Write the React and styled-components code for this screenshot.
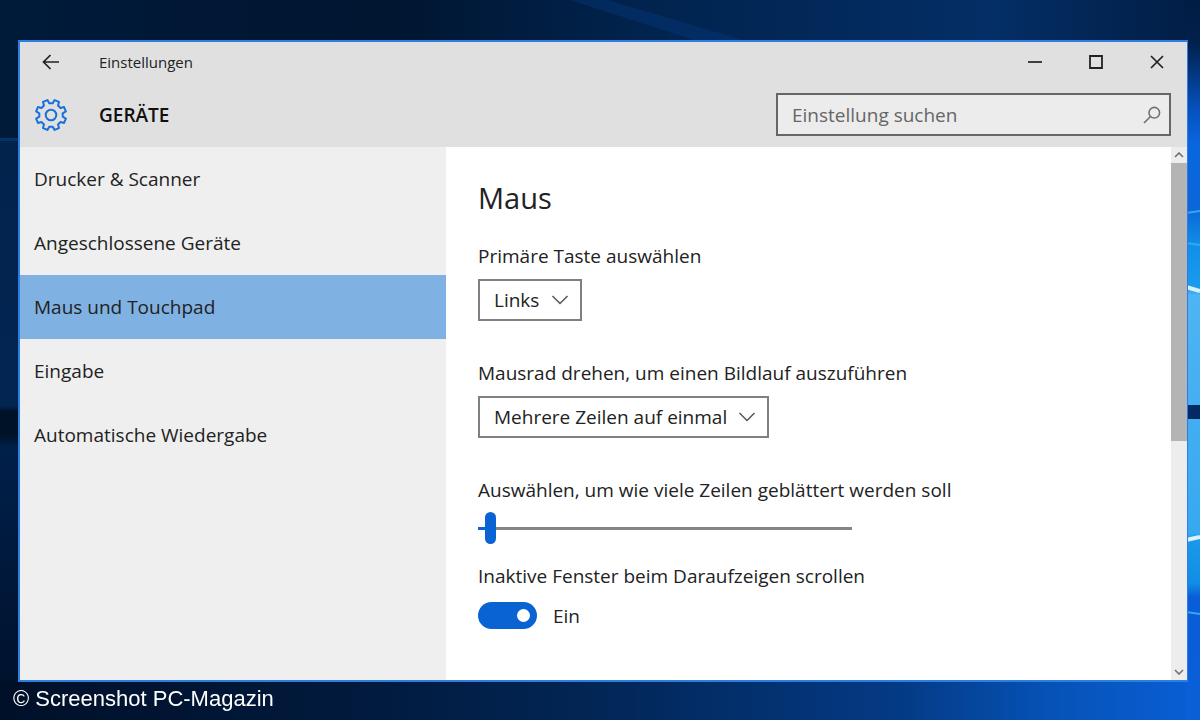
import React, { useState } from "react";
import styled, { createGlobalStyle, css } from "styled-components";

const navItems = [
    "Drucker & Scanner",
    "Angeschlossene Geräte",
    "Maus und Touchpad",
    "Eingabe",
    "Automatische Wiedergabe",
];

// outline of a cog with eight teeth around 0,0
const gearPath = () => {
    const points = [];
    for (let i = 0; i < 8; i++) {
        const mid = 22.5 + i * 45;
        [[-14, 11.8], [-9, 15.3], [9, 15.3], [14, 11.8]].forEach(([offset, r]) => {
            const a = ((mid + offset) * Math.PI) / 180;
            points.push(`${(r * Math.sin(a)).toFixed(2)} ${(-r * Math.cos(a)).toFixed(2)}`);
        });
    }
    return `M${points.join("L")}Z`;
};

const GearIcon = () => (
    <svg width="34" height="34" viewBox="-17 -17 34 34" fill="none" stroke="#1a6fdc" strokeWidth="2" strokeLinejoin="round" aria-hidden="true">
        <path d={gearPath()} />
        <circle r="5.3" />
    </svg>
);

const BackIcon = () => (
    <svg width="18" height="16" viewBox="0 0 18 16" fill="none" stroke="#222" strokeWidth="1.7" aria-hidden="true">
        <path d="M17 8H1.5M8.5 1L1.5 8l7 7" />
    </svg>
);

const SearchIcon = () => (
    <svg width="18" height="18" viewBox="0 0 18 18" fill="none" stroke="#707070" strokeWidth="1.6" aria-hidden="true">
        <circle cx="11.3" cy="6.7" r="5.3" />
        <path d="M7.5 10.5L1 17" />
    </svg>
);

const ChevronDown = () => (
    <svg width="18" height="10" viewBox="0 0 18 10" fill="none" stroke="#555" strokeWidth="1.5" aria-hidden="true">
        <path d="M1.5 1L9 8.5 16.5 1" />
    </svg>
);

const ScrollArrow = ({ d }) => (
    <svg width="10" height="6" viewBox="0 0 10 6" fill="none" stroke="#707070" strokeWidth="1.6" aria-hidden="true">
        <path d={d} />
    </svg>
);

const Wallpaper = () => (
    <Backdrop viewBox="0 0 1200 720" preserveAspectRatio="none" aria-hidden="true">
        <defs>
            <linearGradient id="night" x1="0" x2="1" y1="0" y2="0">
                <stop offset="0" stopColor="#001a3a" />
                <stop offset="0.33" stopColor="#001631" />
                <stop offset="0.55" stopColor="#01244f" />
                <stop offset="0.83" stopColor="#042e66" />
                <stop offset="1" stopColor="#011d44" />
            </linearGradient>
            <linearGradient id="floor" x1="0" x2="1" y1="0" y2="0">
                <stop offset="0" stopColor="#001029" />
                <stop offset="0.3" stopColor="#011a3d" />
                <stop offset="0.5" stopColor="#022656" />
                <stop offset="0.75" stopColor="#043a85" />
                <stop offset="0.88" stopColor="#0653b8" />
                <stop offset="1" stopColor="#0a5fd6" />
            </linearGradient>
            <linearGradient id="edge" x1="0" x2="0" y1="0" y2="1">
                <stop offset="0" stopColor="#02234c" />
                <stop offset="0.46" stopColor="#022552" />
                <stop offset="0.47" stopColor="#001228" />
                <stop offset="0.51" stopColor="#001228" />
                <stop offset="0.53" stopColor="#00204a" />
                <stop offset="1" stopColor="#001029" />
            </linearGradient>
            <linearGradient id="glow" x1="0" x2="0" y1="0" y2="1">
                <stop offset="0" stopColor="#011d44" />
                <stop offset="0.06" stopColor="#01204c" />
                <stop offset="0.15" stopColor="#0650bd" />
                <stop offset="0.2" stopColor="#0a66de" />
                <stop offset="0.29" stopColor="#0b66d8" />
                <stop offset="0.34" stopColor="#0f8fe8" />
                <stop offset="0.4" stopColor="#1a9cee" />
                <stop offset="0.41" stopColor="#4fb4f3" />
                <stop offset="0.74" stopColor="#37a9f0" />
                <stop offset="0.75" stopColor="#1b98ea" />
                <stop offset="0.81" stopColor="#128de6" />
                <stop offset="0.83" stopColor="#0a5cd8" />
                <stop offset="1" stopColor="#0a5fd6" />
            </linearGradient>
        </defs>
        <rect width="1200" height="720" fill="url(#night)" />
        <path d="M570 0h38l142 42h-50z" fill="#063a80" opacity="0.4" />
        <path d="M0 138h20v582H0z" fill="url(#edge)" />
        <path d="M0 138h20v3H0z" fill="#04336c" />
        <rect y="680" width="1200" height="40" fill="url(#floor)" />
        <rect x="1186" width="14" height="720" fill="url(#glow)" />
        <path d="M1186 213l14-2M1186 243l14 2M1186 612l14 2" stroke="#36a6ef" strokeWidth="2" />
        <path d="M1186 287l14 4M1186 540l14-3" stroke="#d8f3ff" strokeWidth="4" />
        <path d="M1186 405h14v14h-14z" fill="#042a66" />
    </Backdrop>
);

const App = () => {
    const [active, setActive] = useState("Maus und Touchpad");
    const [lines, setLines] = useState(3);
    const [inactiveScroll, setInactiveScroll] = useState(true);

    return (
        <>
            <GlobalStyle />
            <Wallpaper />
            <Page>
                <Window>
                    <TitleBar>
                        <BackButton type="button" aria-label="Zurück"><BackIcon /></BackButton>
                        <Title>Einstellungen</Title>
                        <WindowButton type="button" aria-label="Minimieren">
                            <svg width="14" height="14" viewBox="0 0 14 14" stroke="#222" strokeWidth="1.7"><path d="M0 7h14" /></svg>
                        </WindowButton>
                        <WindowButton type="button" aria-label="Maximieren">
                            <svg width="14" height="14" viewBox="0 0 14 14" fill="none" stroke="#222" strokeWidth="1.8"><path d="M1 1h12v12H1z" /></svg>
                        </WindowButton>
                        <WindowButton type="button" aria-label="Schließen">
                            <svg width="14" height="14" viewBox="0 0 14 14" stroke="#222" strokeWidth="1.7"><path d="M1 1l12 12M13 1L1 13" /></svg>
                        </WindowButton>
                    </TitleBar>
                    <Header>
                        <GearBox><GearIcon /></GearBox>
                        <Category>GERÄTE</Category>
                        <SearchBox>
                            <SearchInput type="text" placeholder="Einstellung suchen" aria-label="Einstellung suchen" />
                            <SearchIcon />
                        </SearchBox>
                    </Header>
                    <Body>
                        <Nav>
                            {navItems.map((item) => (
                                <NavItem key={item} href="#" $active={item === active} onClick={() => setActive(item)}>
                                    {item}
                                </NavItem>
                            ))}
                        </Nav>
                        <Content>
                            <Heading>Maus</Heading>
                            <Field $gap="11px" $space="40px">
                                <Label htmlFor="button">Primäre Taste auswählen</Label>
                                <SelectBox $width="104px">
                                    <Select id="button">
                                        <option>Links</option>
                                        <option>Rechts</option>
                                    </Select>
                                    <ChevronDown />
                                </SelectBox>
                            </Field>
                            <Field $gap="11px" $space="40px">
                                <Label htmlFor="wheel">Mausrad drehen, um einen Bildlauf auszuführen</Label>
                                <SelectBox $width="291px">
                                    <Select id="wheel">
                                        <option>Mehrere Zeilen auf einmal</option>
                                        <option>Eine Bildschirmseite</option>
                                    </Select>
                                    <ChevronDown />
                                </SelectBox>
                            </Field>
                            <Field $gap="10px" $space="20px">
                                <Label htmlFor="lines">Auswählen, um wie viele Zeilen geblättert werden soll</Label>
                                <Slider
                                    id="lines"
                                    type="range"
                                    min="1"
                                    max="100"
                                    value={lines}
                                    onChange={(e) => setLines(Number(e.target.value))}
                                    style={{ "--fill": `${lines}%` }}
                                />
                            </Field>
                            <Field $gap="14px" $space="20px">
                                <Label htmlFor="inactive">Inaktive Fenster beim Daraufzeigen scrollen</Label>
                                <ToggleRow>
                                    <Toggle
                                        id="inactive"
                                        type="checkbox"
                                        checked={inactiveScroll}
                                        onChange={(e) => setInactiveScroll(e.target.checked)}
                                    />
                                    <span>{inactiveScroll ? "Ein" : "Aus"}</span>
                                </ToggleRow>
                            </Field>
                        </Content>
                        <ScrollBar>
                            <ScrollButton type="button" aria-label="Nach oben"><ScrollArrow d="M1 5l4-4 4 4" /></ScrollButton>
                            <ScrollThumb />
                            <ScrollRest />
                            <ScrollButton type="button" aria-label="Nach unten"><ScrollArrow d="M1 1l4 4 4-4" /></ScrollButton>
                        </ScrollBar>
                    </Body>
                </Window>
                <Caption>© Screenshot PC-Magazin</Caption>
            </Page>
        </>
    );
};

export default App;

const GlobalStyle = createGlobalStyle`
    * {
        box-sizing: border-box;
    }

    body {
        margin: 0;
        background: #001631;
        color: #222;
        font-family: "Open Sans", "Noto Sans", sans-serif;
        font-size: 19px;
        line-height: 24px;
    }

    button, input, select {
        margin: 0;
        font: inherit;
        color: inherit;
    }

    svg {
        display: block;
        flex: none;
    }
`;

const Backdrop = styled.svg`
    position: fixed;
    inset: 0;
    z-index: -1;
    width: 100%;
    height: 100%;
`;

const Page = styled.div`
    display: flex;
    flex-direction: column;
    min-height: 100vh;
    padding: 40px 12px 4px 18px;
`;

const Window = styled.main`
    flex: 1;
    display: flex;
    flex-direction: column;
    border: 2px solid #2c7fe0;
    border-right-width: 1px;
    background: #fff;
`;

const TitleBar = styled.div`
    display: flex;
    align-items: center;
    height: 40px;
    background: #e0e0e0;
`;

const iconButton = css`
    display: flex;
    align-items: center;
    justify-content: center;
    padding: 0;
    border: none;
    background: none;
`;

const BackButton = styled.button`
    ${iconButton}
    width: 62px;
    height: 100%;
`;

const Title = styled.span`
    flex: 1;
    padding-left: 17px;
    font-size: 15px;
`;

const WindowButton = styled.button`
    ${iconButton}
    width: 61px;
    height: 100%;
`;

const Header = styled.header`
    display: flex;
    align-items: center;
    height: 65px;
    padding-right: 16px;
    background: #e0e0e0;
`;

const GearBox = styled.div`
    display: flex;
    justify-content: center;
    width: 62px;
`;

const Category = styled.h1`
    flex: 1;
    margin: 0;
    padding-left: 17px;
    font-size: 19px;
    font-weight: 600;
    color: #111;
`;

const SearchBox = styled.div`
    display: flex;
    align-items: center;
    width: 395px;
    height: 43px;
    padding: 0 8px 0 14px;
    border: 2px solid #666;
    background: #ececec;
`;

const SearchInput = styled.input`
    flex: 1;
    min-width: 0;
    padding: 0;
    border: none;
    outline: none;
    background: none;

    &::placeholder {
        color: #666;
        opacity: 1;
    }
`;

const Body = styled.div`
    flex: 1;
    display: flex;
`;

const Nav = styled.nav`
    flex: none;
    width: 426px;
    background: #efefef;
`;

const NavItem = styled.a`
    display: flex;
    align-items: center;
    height: 64px;
    padding: 0 14px;
    color: #222;
    text-decoration: none;
    background: ${(props) => (props.$active ? "#7fb1e3" : "none")};
`;

const Content = styled.section`
    flex: 1;
    padding: 33px 32px 24px;
`;

const Heading = styled.h2`
    margin: 0 0 28px;
    font-size: 29px;
    font-weight: 400;
    line-height: 36px;
`;

const Field = styled.div`
    display: flex;
    flex-direction: column;
    align-items: flex-start;
    gap: ${(props) => props.$gap};
    margin-bottom: ${(props) => props.$space};
`;

const Label = styled.label`
    display: block;
`;

// the arrow shares the grid cell of the select
const SelectBox = styled.div`
    display: grid;
    align-items: center;
    width: ${(props) => props.$width};

    > * {
        grid-area: 1 / 1;
    }

    > svg {
        justify-self: end;
        margin-right: 13px;
        pointer-events: none;
    }
`;

const Select = styled.select`
    appearance: none;
    width: 100%;
    height: 42px;
    padding: 0 14px;
    border: 2px solid #808080;
    border-radius: 0;
    background: #fff;
`;

const Slider = styled.input`
    appearance: none;
    width: 374px;
    max-width: 100%;
    height: 32px;
    background: linear-gradient(to right, #0a63d2 var(--fill), #858585 var(--fill)) center / 100% 3px no-repeat;

    &::-webkit-slider-thumb {
        appearance: none;
        width: 11px;
        height: 32px;
        border-radius: 6px;
        background: #0a63d2;
    }
`;

const ToggleRow = styled.div`
    display: flex;
    align-items: center;
    gap: 16px;
`;

const Toggle = styled.input`
    appearance: none;
    display: flex;
    align-items: center;
    width: 59px;
    height: 27px;
    padding: 0 7px;
    border-radius: 14px;
    background: #858585;

    &::before {
        content: "";
        width: 13px;
        height: 13px;
        border-radius: 50%;
        background: #fff;
    }

    &:checked {
        justify-content: flex-end;
        background: #0a63d2;
    }
`;

const ScrollBar = styled.div`
    display: flex;
    flex-direction: column;
    width: 16px;
    background: #ededed;
`;

const ScrollButton = styled.button`
    ${iconButton}
    height: 16px;
`;

const ScrollThumb = styled.div`
    flex: 5;
    background: #b4b4b4;
`;

const ScrollRest = styled.div`
    flex: 4;
`;

const Caption = styled.footer`
    display: flex;
    align-items: center;
    height: 34px;
    margin-left: -5px;
    font-family: "Liberation Sans", Arial, sans-serif;
    font-size: 22px;
    color: #fff;
`;
